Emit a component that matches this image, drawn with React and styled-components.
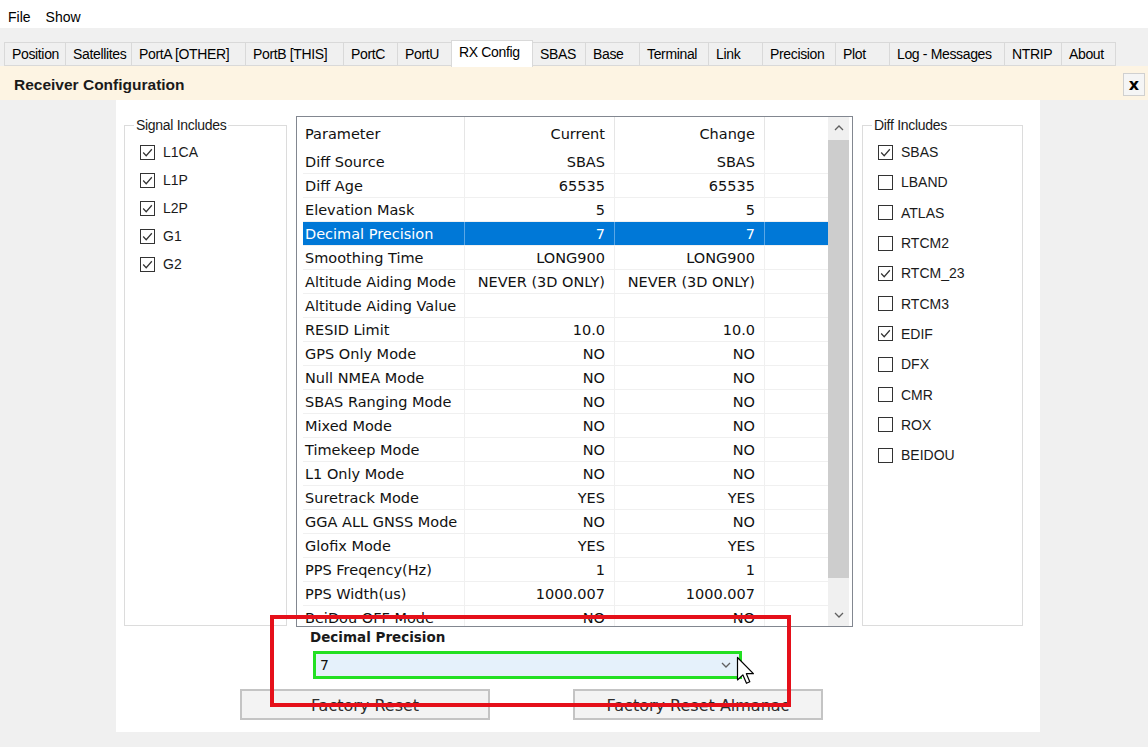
import React from 'react';
import styled, { createGlobalStyle } from 'styled-components';

const GlobalStyle = createGlobalStyle`
  html, body {
    margin: 0;
    padding: 0;
    background: #f0f0f0;
  }
  body {
    font-family: 'Liberation Sans', Arial, sans-serif;
    color: #000;
  }
`;

const tabs = [
  ['Position', 62],
  ['Satellites', 67],
  ['PortA [OTHER]', 115],
  ['PortB [THIS]', 99],
  ['PortC', 55],
  ['PortU', 55],
  ['RX Config', 82],
  ['SBAS', 54],
  ['Base', 55],
  ['Terminal', 70],
  ['Link', 55],
  ['Precision', 74],
  ['Plot', 55],
  ['Log - Messages', 116],
  ['NTRIP', 58],
  ['About', 55],
];

const signalItems = [
  ['L1CA', true],
  ['L1P', true],
  ['L2P', true],
  ['G1', true],
  ['G2', true],
];

const diffItems = [
  ['SBAS', true],
  ['LBAND', false],
  ['ATLAS', false],
  ['RTCM2', false],
  ['RTCM_23', true],
  ['RTCM3', false],
  ['EDIF', true],
  ['DFX', false],
  ['CMR', false],
  ['ROX', false],
  ['BEIDOU', false],
];

const params = [
  ['Diff Source', 'SBAS', 'SBAS'],
  ['Diff Age', '65535', '65535'],
  ['Elevation Mask', '5', '5'],
  ['Decimal Precision', '7', '7'],
  ['Smoothing Time', 'LONG900', 'LONG900'],
  ['Altitude Aiding Mode', 'NEVER (3D ONLY)', 'NEVER (3D ONLY)'],
  ['Altitude Aiding Value', '', ''],
  ['RESID Limit', '10.0', '10.0'],
  ['GPS Only Mode', 'NO', 'NO'],
  ['Null NMEA Mode', 'NO', 'NO'],
  ['SBAS Ranging Mode', 'NO', 'NO'],
  ['Mixed Mode', 'NO', 'NO'],
  ['Timekeep Mode', 'NO', 'NO'],
  ['L1 Only Mode', 'NO', 'NO'],
  ['Suretrack Mode', 'YES', 'YES'],
  ['GGA ALL GNSS Mode', 'NO', 'NO'],
  ['Glofix Mode', 'YES', 'YES'],
  ['PPS Freqency(Hz)', '1', '1'],
  ['PPS Width(us)', '1000.007', '1000.007'],
  ['BeiDou OFF Mode', 'NO', 'NO'],
];

const Window = styled.div`
  width: 1148px;
  height: 747px;
  display: flex;
  flex-direction: column;
  background: #f0f0f0;
  overflow: hidden;
`;

const MenuBar = styled.div`
  box-sizing: border-box;
  height: 28px;
  background: #fff;
  display: flex;
  align-items: center;
  padding: 5px 0 0 8px;
  gap: 15px;
  font-size: 14px;
`;

const MenuItem = styled.span`
  color: #000;
`;

const TabStrip = styled.div`
  margin-top: 14px;
  height: 24px;
  display: flex;
  align-items: flex-end;
  padding-left: 4px;
`;

const Tab = styled.div`
  box-sizing: border-box;
  width: ${(p) => p.$w}px;
  height: ${(p) => (p.$active ? 27 : 24)}px;
  margin-bottom: ${(p) => (p.$active ? -1 : 0)}px;
  padding-left: 7px;
  display: flex;
  align-items: ${(p) => (p.$active ? 'flex-start' : 'center')};
  padding-top: ${(p) => (p.$active ? 3 : 0)}px;
  font-size: 14px;
  letter-spacing: -0.35px;
  white-space: nowrap;
  background: ${(p) => (p.$active ? '#fff' : '#f0f0f0')};
  border: 1px solid #d9d9d9;
  border-bottom: ${(p) => (p.$active ? 'none' : '1px solid #d9d9d9')};
  margin-right: -1px;
  position: relative;
  z-index: ${(p) => (p.$active ? 1 : 0)};
`;

const Header = styled.div`
  box-sizing: border-box;
  height: 34px;
  background: #fdf4e3;
  display: flex;
  align-items: center;
  justify-content: space-between;
  padding: 3px 3px 0 14px;
`;

const HeaderTitle = styled.span`
  font-weight: bold;
  font-size: 15.5px;
  color: #1a1a1a;
`;

const CloseButton = styled.div`
  width: 22px;
  height: 23px;
  box-sizing: border-box;
  border: 1px solid #d0d0d0;
  background: #f5f5f5;
  display: flex;
  align-items: center;
  justify-content: center;
  font-weight: bold;
  font-size: 16px;
  font-family: 'DejaVu Sans', sans-serif;
  margin-top: -1px;
`;

const Content = styled.div`
  flex: 1;
  display: flex;
  padding-left: 116px;
`;

const Panel = styled.div`
  position: relative;
  width: 924px;
  height: 632px;
  background: #fff;
  display: flex;
  flex-direction: column;
`;

const TopRow = styled.div`
  display: flex;
  align-items: flex-start;
  padding-left: 8px;
`;

const Group = styled.fieldset`
  box-sizing: border-box;
  margin: 17px 0 0 0;
  width: ${(p) => p.$w}px;
  height: 509px;
  border: 1px solid #dcdcdc;
  padding: ${(p) => p.$top}px 0 0 ${(p) => p.$left}px;
  min-width: 0;
`;

const Legend = styled.legend`
  font-size: 14px;
  letter-spacing: -0.3px;
  padding: 0 2px;
  margin-left: -6px;
  line-height: 16px;
  color: #1a1a1a;
`;

const CheckRow = styled.div`
  height: ${(p) => p.$h}px;
  display: flex;
  align-items: center;
  gap: 8px;
  font-size: 14px;
  color: #1a1a1a;
`;

const Box = styled.span`
  width: 15px;
  height: 15px;
  box-sizing: border-box;
  border: 1px solid #333;
  background: #fff;
  display: flex;
  align-items: center;
  justify-content: center;
`;

const ListView = styled.div`
  box-sizing: border-box;
  margin: 16px 9px 0 9px;
  width: 557px;
  height: 511px;
  border: 1px solid #828790;
  display: flex;
  overflow: hidden;
  font-family: 'DejaVu Sans', Tahoma, sans-serif;
  font-size: 14.5px;
  color: #111;
`;

const ListBody = styled.div`
  flex: 1;
  display: flex;
  flex-direction: column;
`;

const HeaderRow = styled.div`
  height: 33px;
  flex-shrink: 0;
  display: grid;
  grid-template-columns: 168px 150px 150px 1fr;
`;

const HeadCell = styled.div`
  display: flex;
  align-items: center;
  justify-content: ${(p) => (p.$right ? 'flex-end' : 'flex-start')};
  padding: ${(p) => (p.$right ? '0 9px 0 0' : '0 0 0 8px')};
  border-right: 1px solid #e5e5e5;
  &:last-child {
    border-right: none;
  }
`;

const Row = styled.div`
  box-sizing: border-box;
  height: 24px;
  flex-shrink: 0;
  margin-left: 6px;
  display: grid;
  grid-template-columns: 162px 150px 150px 1fr;
  border-bottom: 1px solid #f0f0f0;
  background: ${(p) => (p.$selected ? '#0078d7' : 'transparent')};
  color: ${(p) => (p.$selected ? '#fff' : 'inherit')};
`;

const Cell = styled.div`
  display: flex;
  align-items: center;
  white-space: nowrap;
  justify-content: ${(p) => (p.$right ? 'flex-end' : 'flex-start')};
  padding: ${(p) => (p.$right ? '0 9px 0 0' : '0 0 0 2px')};
  border-right: 1px solid ${(p) => (p.$selected ? '#5aa7e6' : '#f0f0f0')};
  &:last-child {
    border-right: none;
  }
`;

const ScrollBar = styled.div`
  width: 21px;
  margin-right: 3px;
  background: #f0f0f0;
  display: flex;
  flex-direction: column;
`;

const ScrollArrow = styled.div`
  height: 22px;
  display: flex;
  align-items: center;
  justify-content: center;
`;

const Thumb = styled.div`
  margin: 1px 0 0 0;
  height: 438px;
  background: #cdcdcd;
`;

const Track = styled.div`
  flex: 1;
`;

const BottomArea = styled.div`
  display: flex;
  flex-direction: column;
`;

const FieldLabel = styled.div`
  margin: 1px 0 0 194px;
  height: 18px;
  line-height: 18px;
  font-family: 'DejaVu Sans', Tahoma, sans-serif;
  font-weight: bold;
  font-size: 13.5px;
  color: #1a1a1a;
`;

const Combo = styled.div`
  box-sizing: border-box;
  margin: 5px 0 0 197px;
  width: 429px;
  height: 28px;
  border: 3px solid #22e022;
  background: #e5f1fb;
  display: flex;
  align-items: center;
  justify-content: space-between;
  padding: 0 8px 0 4px;
  font-family: 'DejaVu Sans', Tahoma, sans-serif;
  font-size: 14px;
  color: #111;
`;

const ButtonRow = styled.div`
  display: flex;
  gap: 83px;
  margin: 10px 0 0 124px;
`;

const Button = styled.div`
  box-sizing: border-box;
  width: 250px;
  height: 31px;
  border: 2px solid #c4c4c4;
  background: #f3f3f3;
  display: flex;
  align-items: center;
  justify-content: center;
  padding-top: 2px;
  font-family: 'DejaVu Sans', Tahoma, sans-serif;
  font-size: 16px;
  color: #2e2e2e;
`;

const Annotation = styled.div`
  position: absolute;
  left: 154px;
  top: 515px;
  width: 521px;
  height: 92px;
  box-sizing: border-box;
  border: 4px solid #e5101a;
  pointer-events: none;
`;

const Cursor = styled.svg`
  position: absolute;
  left: 620px;
  top: 556px;
`;

const Check = () => (
  <svg width="13" height="13" viewBox="0 0 12 12">
    <polyline points="2,6 4.8,9 10,3" fill="none" stroke="#333" strokeWidth="1.1" />
  </svg>
);

const Chevron = ({ up }) => (
  <svg width="10" height="6" viewBox="0 0 10 6">
    <polyline
      points={up ? '1,5 5,1 9,5' : '1,1 5,5 9,1'}
      fill="none"
      stroke="#606060"
      strokeWidth="1.3"
    />
  </svg>
);

const CheckGroup = ({ title, items, width, rowHeight, top }) => (
  <Group $w={width} $top={top} $left={15}>
    <Legend>{title}</Legend>
    {items.map(([label, on]) => (
      <CheckRow key={label} $h={rowHeight}>
        <Box>{on && <Check />}</Box>
        {label}
      </CheckRow>
    ))}
  </Group>
);

export default function App() {
  return (
    <Window>
      <GlobalStyle />
      <MenuBar>
        <MenuItem>File</MenuItem>
        <MenuItem>Show</MenuItem>
      </MenuBar>
      <TabStrip>
        {tabs.map(([name, w]) => (
          <Tab key={name} $w={w} $active={name === 'RX Config'}>
            {name}
          </Tab>
        ))}
      </TabStrip>
      <Header>
        <HeaderTitle>Receiver Configuration</HeaderTitle>
        <CloseButton>x</CloseButton>
      </Header>
      <Content>
        <Panel>
          <TopRow>
            <CheckGroup title="Signal Includes" items={signalItems} width={163} rowHeight={28} top={5} />
            <ListView>
              <ListBody>
                <HeaderRow>
                  <HeadCell>Parameter</HeadCell>
                  <HeadCell $right>Current</HeadCell>
                  <HeadCell $right>Change</HeadCell>
                  <HeadCell />
                </HeaderRow>
                {params.map(([name, cur, chg]) => {
                  const sel = name === 'Decimal Precision';
                  return (
                    <Row key={name} $selected={sel}>
                      <Cell $selected={sel}>{name}</Cell>
                      <Cell $selected={sel} $right>{cur}</Cell>
                      <Cell $selected={sel} $right>{chg}</Cell>
                      <Cell $selected={sel} />
                    </Row>
                  );
                })}
              </ListBody>
              <ScrollBar>
                <ScrollArrow><Chevron up /></ScrollArrow>
                <Thumb />
                <Track />
                <ScrollArrow><Chevron /></ScrollArrow>
              </ScrollBar>
            </ListView>
            <CheckGroup title="Diff Includes" items={diffItems} width={161} rowHeight={30.3} top={4} />
          </TopRow>
          <BottomArea>
            <FieldLabel>Decimal Precision</FieldLabel>
            <Combo>
              <span>7</span>
              <Chevron />
            </Combo>
            <ButtonRow>
              <Button>Factory Reset</Button>
              <Button>Factory Reset Almanac</Button>
            </ButtonRow>
          </BottomArea>
          <Annotation />
          <Cursor width="18" height="30" viewBox="0 0 12 20">
            <path
              d="M1 1 L1 16 L4.6 12.6 L7 18.2 L9.2 17.2 L6.9 11.8 L11.6 11.8 Z"
              fill="#fff"
              stroke="#000"
              strokeWidth="0.8"
              strokeLinejoin="round"
            />
          </Cursor>
        </Panel>
      </Content>
    </Window>
  );
}
